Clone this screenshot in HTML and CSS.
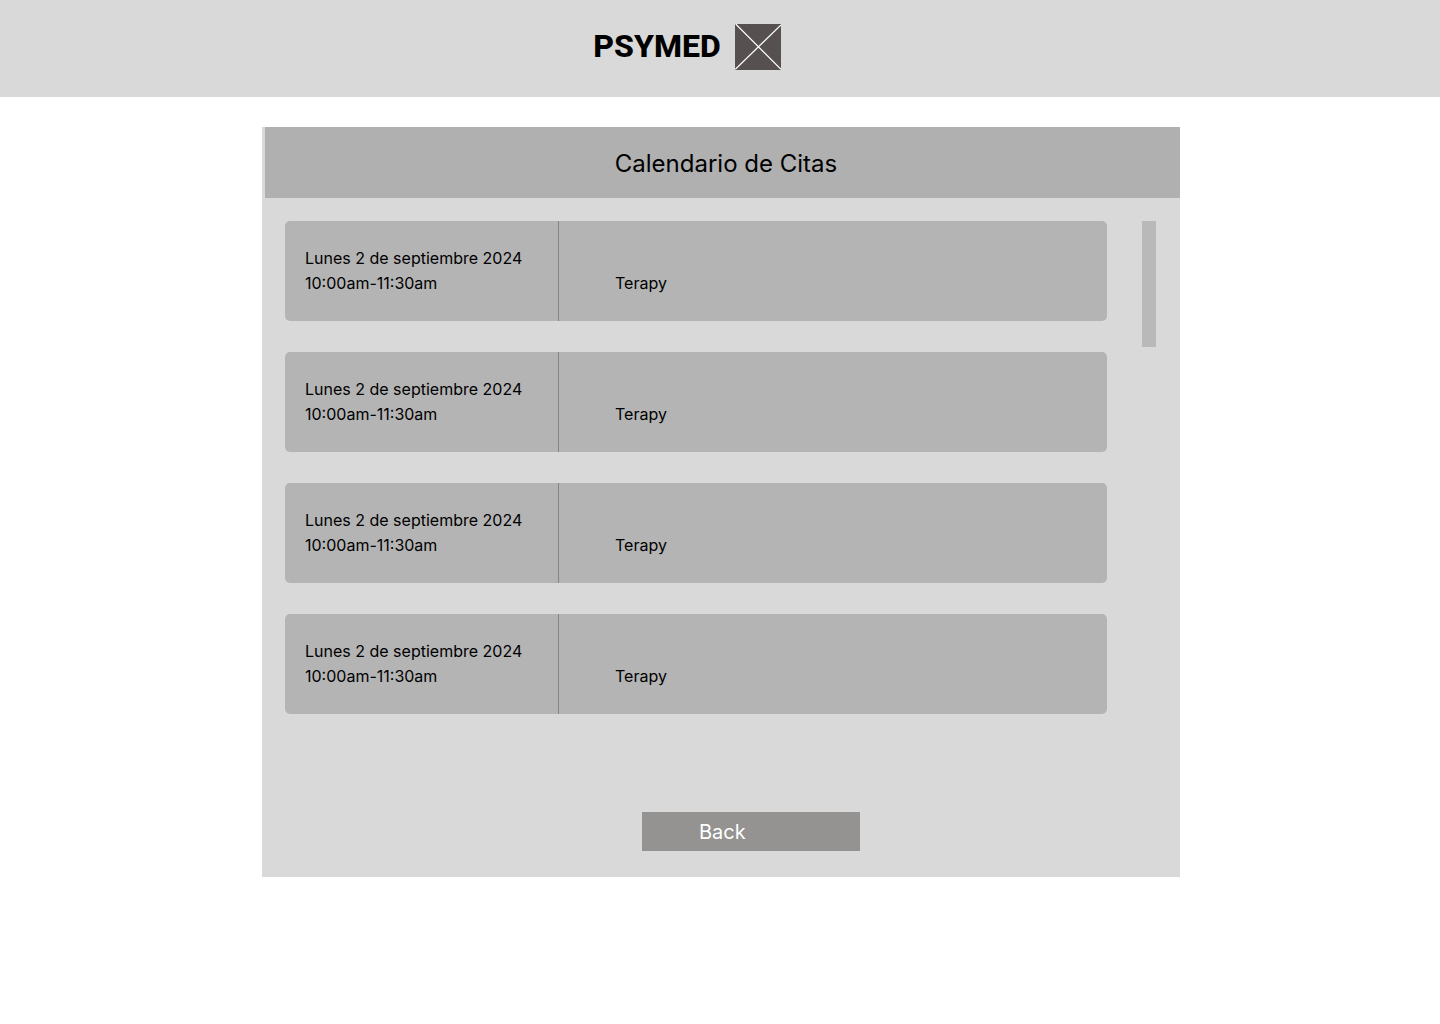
FILE: index.html
```
<!DOCTYPE html>
<html lang="es">
<head>
  <meta charset="utf-8">
  <meta name="viewport" content="width=device-width, initial-scale=1">
  <title>Calendario de Citas</title>
  <link rel="stylesheet" href="styles.css">
</head>
<body>
  <header class="topbar">
    <span class="brand">PSYMED</span>
    <svg class="logo" width="46" height="46" viewBox="0 0 46 46" aria-hidden="true">
      <rect width="46" height="46" fill="#565150"/>
      <path d="M0.7 0L46 45.3M0.35 45.35L46 0.9" stroke="#fff" stroke-width="1.2" fill="none"/>
    </svg>
  </header>
  <main class="panel">
    <h1 class="panel-title">Calendario de Citas</h1>
    <div class="panel-body">
      <ul class="appointments">
        <li class="appointment">
          <div class="when">Lunes 2 de septiembre 2024<br>10:00am-11:30am</div>
          <div class="what">Terapy</div>
        </li>
        <li class="appointment">
          <div class="when">Lunes 2 de septiembre 2024<br>10:00am-11:30am</div>
          <div class="what">Terapy</div>
        </li>
        <li class="appointment">
          <div class="when">Lunes 2 de septiembre 2024<br>10:00am-11:30am</div>
          <div class="what">Terapy</div>
        </li>
        <li class="appointment">
          <div class="when">Lunes 2 de septiembre 2024<br>10:00am-11:30am</div>
          <div class="what">Terapy</div>
        </li>
      </ul>
      <div class="scroll-thumb"></div>
    </div>
    <div class="actions">
      <button class="back" type="button">Back</button>
    </div>
  </main>
</body>
</html>
```
FILE: styles.css
```
* {
  box-sizing: border-box;
}

body {
  margin: 0;
  background: #fff;
  color: #000;
  font-family: Inter, sans-serif;
  font-size: 16px;
  line-height: 25px;
}

.topbar {
  display: flex;
  justify-content: center;
  gap: 14px;
  padding: 24px 66px 27px 0;
  background: #d9d9d9;
}

.brand {
  font-family: Roboto, sans-serif;
  font-size: 32px;
  font-weight: 800;
  line-height: 45px;
}

.logo {
  display: block;
}

.panel {
  margin: 30px 260px 0 262px;
  padding-bottom: 26px;
  background: #d9d9d9;
}

.panel-title {
  margin: 0 0 0 3px;
  padding: 21px 0 18px 7px;
  background: #b0b0b0;
  font-size: 24px;
  font-weight: 400;
  line-height: 32px;
  text-align: center;
}

.panel-body {
  display: flex;
  align-items: flex-start;
  gap: 35px;
  padding: 23px 24px 0 23px;
}

.appointments {
  display: flex;
  flex: 1;
  flex-direction: column;
  gap: 31px;
  margin: 0;
  padding: 0;
  list-style: none;
}

.appointment {
  display: flex;
  border-radius: 5px;
  background: #b4b4b4;
}

.when {
  width: 274px;
  padding: 25px 20px;
  border-right: 1px solid #858585;
}

.what {
  align-self: flex-end;
  padding: 0 56px 25px;
}

.scroll-thumb {
  width: 14px;
  height: 126px;
  background: #b9b9b9;
}

.actions {
  display: flex;
  justify-content: center;
  margin-top: 98px;
  padding-left: 60px;
}

.back {
  width: 218px;
  padding: 8px 57px 6px;
  border: 0;
  background: #949391;
  color: #fff;
  font-family: inherit;
  font-size: 20px;
  line-height: 25px;
  text-align: left;
}
```
